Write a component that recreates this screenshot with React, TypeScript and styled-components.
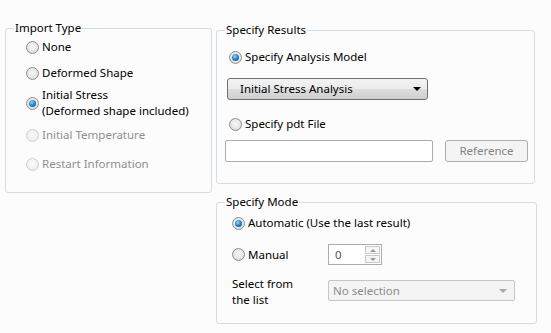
import React from "react";
import styled, { createGlobalStyle, css } from "styled-components";

const GlobalStyle = createGlobalStyle`
  html, body { margin: 0; padding: 0; background: #fcfcfc; }
  body {
    font-family: "Noto Sans", "Open Sans", Arial, sans-serif;
    font-size: 11.5px;
    color: #000;
  }
  * { box-sizing: border-box; }
`;

const Page = styled.div`
  width: 551px;
  height: 333px;
  display: flex;
  align-items: flex-start;
  gap: 4px;
  padding-left: 5px;
  background: #fcfcfc;
`;

const LeftColumn = styled.div`
  padding-top: 28px;
`;

const RightColumn = styled.div`
  display: flex;
  flex-direction: column;
  gap: 18px;
  padding-top: 30px;
`;

const Group = styled.div<{ $w: number; $h: number; $pl: number }>`
  position: relative;
  width: ${(p) => p.$w}px;
  height: ${(p) => p.$h}px;
  border: 1px solid #d3dde4;
  border-radius: 3px;
  display: flex;
  flex-direction: column;
  align-items: flex-start;
  padding-left: ${(p) => p.$pl}px;
`;

const Legend = styled.span`
  position: absolute;
  top: -8px;
  left: 8px;
  padding: 0 1px;
  line-height: 14px;
  background: #fcfcfc;
  color: #000;
`;

const RadioRow = styled.label<{ $mt: number; $disabled?: boolean; $lh: number }>`
  display: flex;
  align-items: center;
  gap: 3px;
  margin-top: ${(p) => p.$mt}px;
  line-height: ${(p) => p.$lh}px;
  color: ${(p) => (p.$disabled ? "#8f8f8f" : "#000")};
  white-space: nowrap;
`;

const RadioDot = styled.span<{ $checked?: boolean; $disabled?: boolean }>`
  position: relative;
  flex: none;
  width: 13px;
  height: 13px;
  border-radius: 50%;
  border: 1px solid #8e8f8f;
  background: radial-gradient(circle at 50% 45%, #f8f8f8 0%, #e6e6e6 55%, #cbcbcb 100%);
  ${(p) =>
    p.$disabled &&
    css`
      border-color: #cfd0d0;
      background: radial-gradient(circle at 50% 45%, #fafafa 0%, #f0f0f0 60%, #e2e2e2 100%);
    `}
  ${(p) =>
    p.$checked &&
    css`
      &::after {
        content: "";
        position: absolute;
        left: 2px;
        top: 2px;
        width: 7px;
        height: 7px;
        border-radius: 50%;
        background: radial-gradient(circle at 40% 35%, #9ad8ff 0%, #2a86cc 45%, #0b4c86 100%);
      }
    `}
`;

const Label = styled.span`
  display: block;
`;

const Radio = ({
  mt,
  checked,
  disabled,
  lh = 14,
  children,
}: {
  mt: number;
  checked?: boolean;
  disabled?: boolean;
  lh?: number;
  children: React.ReactNode;
}) => (
  <RadioRow $mt={mt} $disabled={disabled} $lh={lh}>
    <RadioDot $checked={checked} $disabled={disabled} />
    <Label>{children}</Label>
  </RadioRow>
);

const DropButton = styled.div<{ $mt: number; $ml: number }>`
  margin-top: ${(p) => p.$mt}px;
  margin-left: ${(p) => p.$ml}px;
  width: 201px;
  height: 22px;
  border: 1px solid #707070;
  border-radius: 3px;
  background: linear-gradient(#f3f3f3 0%, #ebebeb 50%, #dddddd 51%, #cfcfcf 100%);
  display: flex;
  align-items: center;
  justify-content: space-between;
  padding: 0 6px 0 12px;
  line-height: 14px;
`;

const Arrow = styled.span<{ $color: string }>`
  width: 0;
  height: 0;
  border-left: 4px solid transparent;
  border-right: 4px solid transparent;
  border-top: 4px solid ${(p) => p.$color};
`;

const FileRow = styled.div`
  display: flex;
  align-items: center;
  gap: 12px;
  margin-top: 9px;
  margin-left: -4px;
`;

const TextInput = styled.div`
  width: 208px;
  height: 22px;
  border: 1px solid #acacac;
  border-radius: 2px;
  background: #fff;
`;

const Button = styled.div`
  width: 83px;
  height: 22px;
  border: 1px solid #adadad;
  border-radius: 3px;
  background: #f4f4f4;
  color: #838383;
  display: flex;
  align-items: center;
  justify-content: center;
  line-height: 14px;
`;

const FieldRow = styled.div<{ $mt: number; $align: string }>`
  display: flex;
  align-items: ${(p) => p.$align};
  margin-top: ${(p) => p.$mt}px;
`;

const FieldLabel = styled.div`
  width: 96px;
  flex: none;
`;

const SpinBox = styled.div`
  width: 54px;
  height: 21px;
  border: 1px solid #acacac;
  background: #fff;
  display: flex;
  align-items: center;
  justify-content: space-between;
  padding: 1px 1px 1px 6px;
  color: #555;
  line-height: 14px;
`;

const SpinButtons = styled.div`
  display: flex;
  flex-direction: column;
  gap: 1px;
  height: 100%;
  width: 15px;
`;

const SpinButton = styled.div`
  flex: 1;
  border: 1px solid #c9c9c9;
  background: #f5f5f5;
  display: flex;
  align-items: center;
  justify-content: center;
`;

const SmallArrow = styled.span<{ $up?: boolean }>`
  width: 0;
  height: 0;
  border-left: 3px solid transparent;
  border-right: 3px solid transparent;
  ${(p) =>
    p.$up
      ? css`border-bottom: 3px solid #9a9a9a;`
      : css`border-top: 3px solid #9a9a9a;`}
`;

const SelectLabel = styled.div`
  width: 96px;
  flex: none;
  line-height: 16px;
  margin-top: -4px;
`;

const DisabledSelect = styled.div`
  width: 187px;
  height: 21px;
  border: 1px solid #c6c6c6;
  border-radius: 2px;
  background: #f4f4f4;
  color: #8b8b8b;
  display: flex;
  align-items: center;
  justify-content: space-between;
  padding: 0 7px 0 4px;
  line-height: 14px;
`;

export default function App() {
  return (
    <>
      <GlobalStyle />
      <Page>
        <LeftColumn>
          <Group $w={207} $h={165} $pl={20}>
            <Legend>Import Type</Legend>
            <Radio mt={11}>None</Radio>
            <Radio mt={12}>Deformed Shape</Radio>
            <Radio mt={7} lh={16} checked>
              Initial Stress
              <br />
              (Deformed shape included)
            </Radio>
            <Radio mt={9} disabled>
              Initial Temperature
            </Radio>
            <Radio mt={15} disabled>
              Restart Information
            </Radio>
          </Group>
        </LeftColumn>
        <RightColumn>
          <Group $w={319} $h={154} $pl={12}>
            <Legend>Specify Results</Legend>
            <Radio mt={19} checked>
              Specify Analysis Model
            </Radio>
            <DropButton $mt={14} $ml={-2}>
              <span>Initial Stress Analysis</span>
              <Arrow $color="#000" />
            </DropButton>
            <Radio mt={17}>Specify pdt File</Radio>
            <FileRow>
              <TextInput />
              <Button>Reference</Button>
            </FileRow>
          </Group>
          <Group $w={321} $h={122} $pl={15}>
            <Legend>Specify Mode</Legend>
            <Radio mt={13} checked>
              Automatic (Use the last result)
            </Radio>
            <FieldRow $mt={14} $align="center">
              <FieldLabel>
                <Radio mt={0}>Manual</Radio>
              </FieldLabel>
              <SpinBox>
                <span>0</span>
                <SpinButtons>
                  <SpinButton>
                    <SmallArrow $up />
                  </SpinButton>
                  <SpinButton>
                    <SmallArrow />
                  </SpinButton>
                </SpinButtons>
              </SpinBox>
            </FieldRow>
            <FieldRow $mt={15} $align="flex-start">
              <SelectLabel>
                Select from
                <br />
                the list
              </SelectLabel>
              <DisabledSelect>
                <span>No selection</span>
                <Arrow $color="#a8a8a8" />
              </DisabledSelect>
            </FieldRow>
          </Group>
        </RightColumn>
      </Page>
    </>
  );
}
